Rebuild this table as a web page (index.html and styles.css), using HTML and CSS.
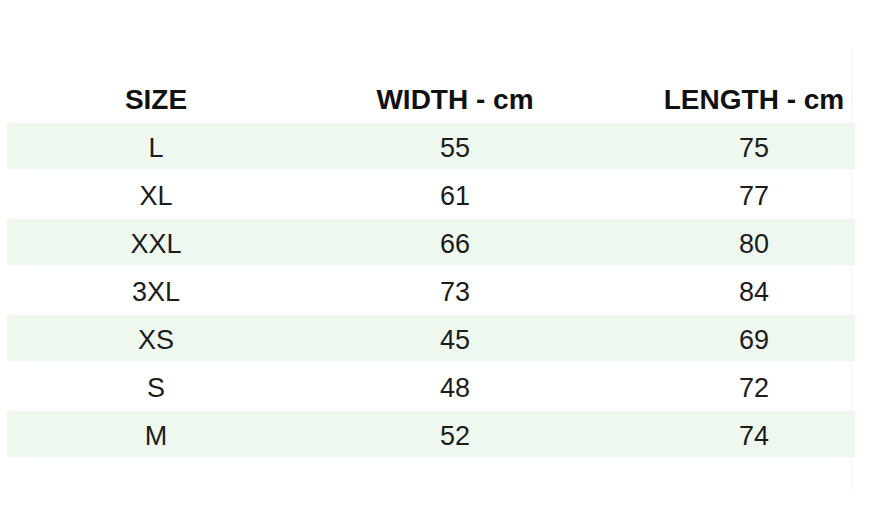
FILE: index.html
```html
<!DOCTYPE html>
<html lang="en">
<head>
<meta charset="utf-8">
<title>Size chart</title>
<link rel="stylesheet" href="styles.css">
</head>
<body>
<div class="frame">
  <div class="clip">
    <table class="chart">
      <colgroup>
        <col class="c1"><col class="c2"><col class="c3">
      </colgroup>
      <thead>
        <tr><th>SIZE</th><th>WIDTH - cm</th><th>LENGTH - cm</th></tr>
      </thead>
      <tbody>
        <tr class="alt"><td>L</td><td>55</td><td>75</td></tr>
        <tr><td>XL</td><td>61</td><td>77</td></tr>
        <tr class="alt"><td>XXL</td><td>66</td><td>80</td></tr>
        <tr><td>3XL</td><td>73</td><td>84</td></tr>
        <tr class="alt"><td>XS</td><td>45</td><td>69</td></tr>
        <tr><td>S</td><td>48</td><td>72</td></tr>
        <tr class="alt"><td>M</td><td>52</td><td>74</td></tr>
      </tbody>
    </table>
  </div>
</div>
</body>
</html>
```

FILE: styles.css
```css
html, body {
  margin: 0;
  padding: 0;
  background: #ffffff;
}
body {
  width: 870px;
  height: 524px;
  overflow: hidden;
  font-family: "Liberation Sans", Arial, sans-serif;
  color: #1c1c1c;
}
.frame {
  margin: 47px 0 0 7px;
  width: 845px;
  height: 443px;
  border-right: 1px solid #f4f4f4;
  padding-top: 26px;
  box-sizing: border-box;
}
.clip {
  width: 848px;
  overflow: hidden;
}
.chart {
  width: 896px;
  border-collapse: separate;
  border-spacing: 0 2px;
  table-layout: fixed;
}
.c1 { width: 298px; }
.c2 { width: 300px; }
.c3 { width: 298px; }
.chart th {
  height: 46px;
  padding: 4px 0 0;
  box-sizing: border-box;
  font-size: 28px;
  font-weight: bold;
  text-align: center;
  color: #111;
  white-space: nowrap;
}
.chart td {
  height: 46px;
  padding: 5px 0 0;
  box-sizing: border-box;
  font-size: 27px;
  text-align: center;
}
.chart tr.alt td {
  background: #eef8ef;
}
```
